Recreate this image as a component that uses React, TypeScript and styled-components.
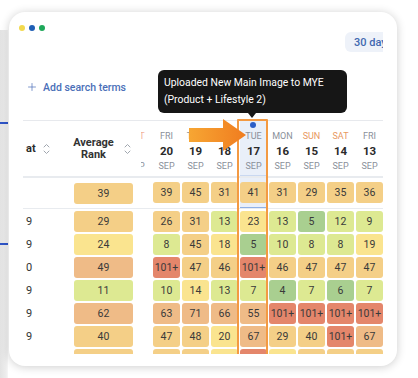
import React from 'react';
import styled, { createGlobalStyle } from 'styled-components';
import { Plus } from 'lucide-react';

const GlobalStyle = createGlobalStyle`
  html, body {
    margin: 0;
    padding: 0;
    background: #ffffff;
  }
  body {
    font-family: Roboto, 'Noto Sans', sans-serif;
    -webkit-font-smoothing: antialiased;
  }
`;

const Page = styled.div`
  width: 418px;
  height: 378px;
  box-sizing: border-box;
  padding: 12px 21px 12px 9px;
  overflow: hidden;
  background:
    linear-gradient(#2f55c8, #2f55c8) 0 122px / 8px 2px no-repeat,
    linear-gradient(#2f55c8, #2f55c8) 0 243px / 8px 2px no-repeat,
    linear-gradient(to right, #e3e3e3, #ededed 6px, #f6f6f6 8px) 0 30px / 8px 100% no-repeat,
    #ffffff;
`;

const Card = styled.div`
  position: relative;
  height: 354px;
  border-radius: 16px;
  background: #ffffff;
  box-shadow: 0 1px 10px rgba(0, 0, 0, 0.2);
  overflow: hidden;
`;

const Dots = styled.div`
  display: flex;
  gap: 4px;
  padding: 13px 0 0 10px;
`;

const Dot = styled.span<{ $color: string }>`
  width: 6px;
  height: 6px;
  border-radius: 50%;
  background: ${(p) => p.$color};
`;

const Inner = styled.div`
  margin: 0 14px;
  overflow: hidden;
`;

const Toolbar = styled.div`
  display: flex;
  justify-content: flex-end;
  margin-top: 1px;
`;

const RangeButton = styled.button`
  width: 52px;
  height: 20px;
  margin-right: -14px;
  padding: 0 0 0 9px;
  border: none;
  border-radius: 6px 0 0 6px;
  background: #eef2f9;
  color: #4169b0;
  font-family: Roboto, sans-serif;
  font-size: 11px;
  font-weight: 500;
  text-align: left;
  white-space: nowrap;
  overflow: hidden;
`;

const AddRow = styled.div`
  display: flex;
  align-items: center;
  gap: 5px;
  height: 20px;
  margin-top: 25px;
  padding-left: 3px;
  color: #4b6fb8;
  font-size: 10.5px;
  font-weight: 500;
`;

const Table = styled.div`
  position: relative;
  margin-top: 23px;
  border-top: 1px solid #e7e9ed;
`;

const HeaderRow = styled.div`
  display: flex;
  height: 55px;
  border-bottom: 2px solid #e8ebef;
`;

const HeadAt = styled.div`
  width: 47px;
  display: flex;
  align-items: center;
  gap: 7px;
  padding-left: 3px;
  box-sizing: border-box;
  font-size: 11px;
  font-weight: 700;
  color: #2b2b2b;
`;

const HeadAvg = styled.div`
  width: 71px;
  display: flex;
  align-items: center;
  padding-left: 2px;
  box-sizing: border-box;
`;

const HeadAvgText = styled.div`
  width: 43px;
  text-align: center;
  font-size: 11px;
  line-height: 12px;
  font-weight: 700;
  color: #333;
  margin-right: 9px;
`;

const Partial = styled.div`
  width: 12px;
  overflow: hidden;
  display: flex;
`;

const DayHeads = styled.div`
  display: flex;
  gap: 2px;
`;

const DayHead = styled.div<{ $highlight?: boolean; $shift?: boolean }>`
  position: relative;
  flex: 0 0 27px;
  display: flex;
  flex-direction: column;
  align-items: center;
  padding-top: 9px;
  box-sizing: border-box;
  margin-left: ${(p) => (p.$shift ? '-18px' : '0')};
  background: ${(p) => (p.$highlight ? '#e9eff9' : 'transparent')};
  box-shadow: ${(p) => (p.$highlight ? 'inset 0 -1px #c9d8f1' : 'none')};
`;

const DayName = styled.span<{ $weekend?: boolean; $faded?: boolean }>`
  font-size: 9px;
  line-height: 12px;
  color: ${(p) => (p.$faded ? '#f3b39a' : p.$weekend ? '#e8985f' : '#8a909a')};
`;

const DayNum = styled.span`
  margin-top: 1px;
  font-size: 11.5px;
  line-height: 16px;
  font-weight: 700;
  color: #2a2a2a;
`;

const DayMonth = styled.span`
  margin-top: 1px;
  font-size: 9px;
  line-height: 12px;
  color: #8a909a;
`;

const EventDot = styled.span`
  position: absolute;
  top: 1px;
  left: 10px;
  width: 6px;
  height: 6px;
  border-radius: 50%;
  background: #2e5fc6;
`;

const SummaryRow = styled.div`
  display: flex;
  border-bottom: 1px solid #e8ebef;
`;

const AtCell = styled.div`
  width: 47px;
  padding-left: 3px;
  box-sizing: border-box;
  font-size: 11px;
  line-height: 21px;
  color: #333;
  align-self: center;
`;

const AvgSlot = styled.div`
  width: 71px;
  padding-left: 4px;
  box-sizing: border-box;
  align-self: center;
`;

const Spacer = styled.div`
  width: 12px;
`;

const Slots = styled.div`
  display: flex;
  gap: 2px;
`;

const SummarySlot = styled.div<{ $highlight?: boolean }>`
  padding: 4px 0 5px;
  background: ${(p) => (p.$highlight ? '#e9eff9' : 'transparent')};
  box-shadow: ${(p) => (p.$highlight ? 'inset 0 -1px #8fb0e6' : 'none')};
`;

const Body = styled.div`
  display: flex;
  flex-direction: column;
  gap: 2px;
  padding-top: 2px;
  height: 143px;
  overflow: hidden;
`;

const Row = styled.div`
  display: flex;
  flex: 0 0 21px;
`;

const Cell = styled.div<{ $bg: string; $wide?: boolean }>`
  width: ${(p) => (p.$wide ? '59px' : '27px')};
  height: 21px;
  border-radius: 3px;
  background: ${(p) => p.$bg};
  color: #3a3a3a;
  font-size: 10.5px;
  line-height: 21px;
  text-align: center;
  white-space: nowrap;
`;

const HighlightBox = styled.div`
  position: absolute;
  left: 214px;
  top: -2px;
  width: 31px;
  height: 237px;
  border: 2px solid #f39a43;
  border-radius: 1px;
  box-sizing: border-box;
  pointer-events: none;
`;

const Tooltip = styled.div`
  position: absolute;
  left: 149px;
  top: 58px;
  width: 189px;
  height: 43px;
  box-sizing: border-box;
  padding: 4px 6px;
  border-radius: 6px;
  background: #161616;
  color: #ffffff;
  font-size: 10.4px;
  line-height: 17px;
  white-space: nowrap;
  z-index: 3;
  &::after {
    content: '';
    position: absolute;
    left: 90px;
    bottom: -5px;
    border-left: 4px solid transparent;
    border-right: 4px solid transparent;
    border-top: 5px solid #161616;
  }
`;

const Arrow = styled.svg`
  position: absolute;
  left: 169px;
  top: 92px;
  z-index: 2;
`;

const SortIcon = () => (
  <svg width="7" height="12" viewBox="0 0 7 12" fill="none" stroke="#a0a6ae" strokeWidth="1" strokeLinecap="round" strokeLinejoin="round">
    <path d="M1 4 L3.5 1.5 L6 4" />
    <path d="M1 8 L3.5 10.5 L6 8" />
  </svg>
);

const colorFor = (v: string) => {
  if (v === '101+') return '#e4866b';
  const n = Number(v);
  if (n <= 6) return '#a9cf90';
  if (n <= 13) return '#dde992';
  if (n <= 24) return '#fae48f';
  if (n <= 48) return '#f4cf87';
  return '#efbb87';
};

const days = [
  { name: 'FRI', num: '20' },
  { name: 'THU', num: '19' },
  { name: 'WED', num: '18' },
  { name: 'TUE', num: '17', highlight: true },
  { name: 'MON', num: '16' },
  { name: 'SUN', num: '15', weekend: true },
  { name: 'SAT', num: '14', weekend: true },
  { name: 'FRI', num: '13' },
];

const summary = { avg: '39', values: ['39', '45', '31', '41', '31', '29', '35', '36'] };

const rows = [
  { at: '9', avg: '29', values: ['26', '31', '13', '23', '13', '5', '12', '9'] },
  { at: '9', avg: '24', values: ['8', '45', '18', '5', '10', '8', '8', '19'] },
  { at: '0', avg: '49', values: ['101+', '47', '46', '101+', '46', '47', '47', '47'] },
  { at: '9', avg: '11', values: ['10', '14', '13', '7', '4', '7', '6', '7'] },
  { at: '9', avg: '62', values: ['63', '71', '66', '55', '101+', '101+', '101+', '101+'] },
  { at: '9', avg: '40', values: ['47', '48', '20', '67', '29', '40', '101+', '67'] },
  { at: '9', avg: '38', values: ['41', '44', '22', '101+', '21', '39', '42', '45'] },
];

const App = () => {
  return (
    <Page>
      <GlobalStyle />
      <Card>
        <Dots>
          <Dot $color="#f2d94e" />
          <Dot $color="#1f5fb5" />
          <Dot $color="#1ea85a" />
        </Dots>
        <Inner>
          <Toolbar>
            <RangeButton>30 days</RangeButton>
          </Toolbar>
          <AddRow>
            <Plus size={12} strokeWidth={1.4} />
            <span>Add search terms</span>
          </AddRow>
          <Table>
            <HeaderRow>
              <HeadAt>
                at
                <SortIcon />
              </HeadAt>
              <HeadAvg>
                <HeadAvgText>
                  Average
                  <br />
                  Rank
                </HeadAvgText>
                <SortIcon />
              </HeadAvg>
              <Partial>
                <DayHead $shift>
                  <DayName $faded>SAT</DayName>
                  <DayNum>&nbsp;</DayNum>
                  <DayMonth>SEP</DayMonth>
                </DayHead>
              </Partial>
              <DayHeads>
                {days.map((d, i) => (
                  <DayHead key={i} $highlight={d.highlight}>
                    {d.highlight && <EventDot />}
                    <DayName $weekend={d.weekend}>{d.name}</DayName>
                    <DayNum>{d.num}</DayNum>
                    <DayMonth>SEP</DayMonth>
                  </DayHead>
                ))}
              </DayHeads>
            </HeaderRow>
            <SummaryRow>
              <AtCell />
              <AvgSlot>
                <Cell $wide $bg={colorFor(summary.avg)}>{summary.avg}</Cell>
              </AvgSlot>
              <Spacer />
              <Slots>
                {summary.values.map((v, i) => (
                  <SummarySlot key={i} $highlight={days[i].highlight}>
                    <Cell $bg={colorFor(v)}>{v}</Cell>
                  </SummarySlot>
                ))}
              </Slots>
            </SummaryRow>
            <Body>
              {rows.map((r, ri) => (
                <Row key={ri}>
                  <AtCell>{r.at}</AtCell>
                  <AvgSlot>
                    <Cell $wide $bg={colorFor(r.avg)}>{r.avg}</Cell>
                  </AvgSlot>
                  <Spacer />
                  <Slots>
                    {r.values.map((v, i) => (
                      <Cell key={i} $bg={colorFor(v)}>{v}</Cell>
                    ))}
                  </Slots>
                </Row>
              ))}
            </Body>
            <HighlightBox />
          </Table>
        </Inner>
        <Arrow width="70" height="50" viewBox="0 0 70 50">
          <defs>
            <linearGradient id="arrowFill" x1="0" y1="0" x2="1" y2="0">
              <stop offset="0" stopColor="#f7a633" />
              <stop offset="1" stopColor="#f07c1f" />
            </linearGradient>
          </defs>
          <path d="M11 24 H45 V15 L68 31 L45 47 V38 H11 Z" fill="url(#arrowFill)" />
        </Arrow>
        <Tooltip>
          Uploaded New Main Image to MYE
          <br />
          (Product + Lifestyle 2)
        </Tooltip>
      </Card>
    </Page>
  );
};

export default App;
